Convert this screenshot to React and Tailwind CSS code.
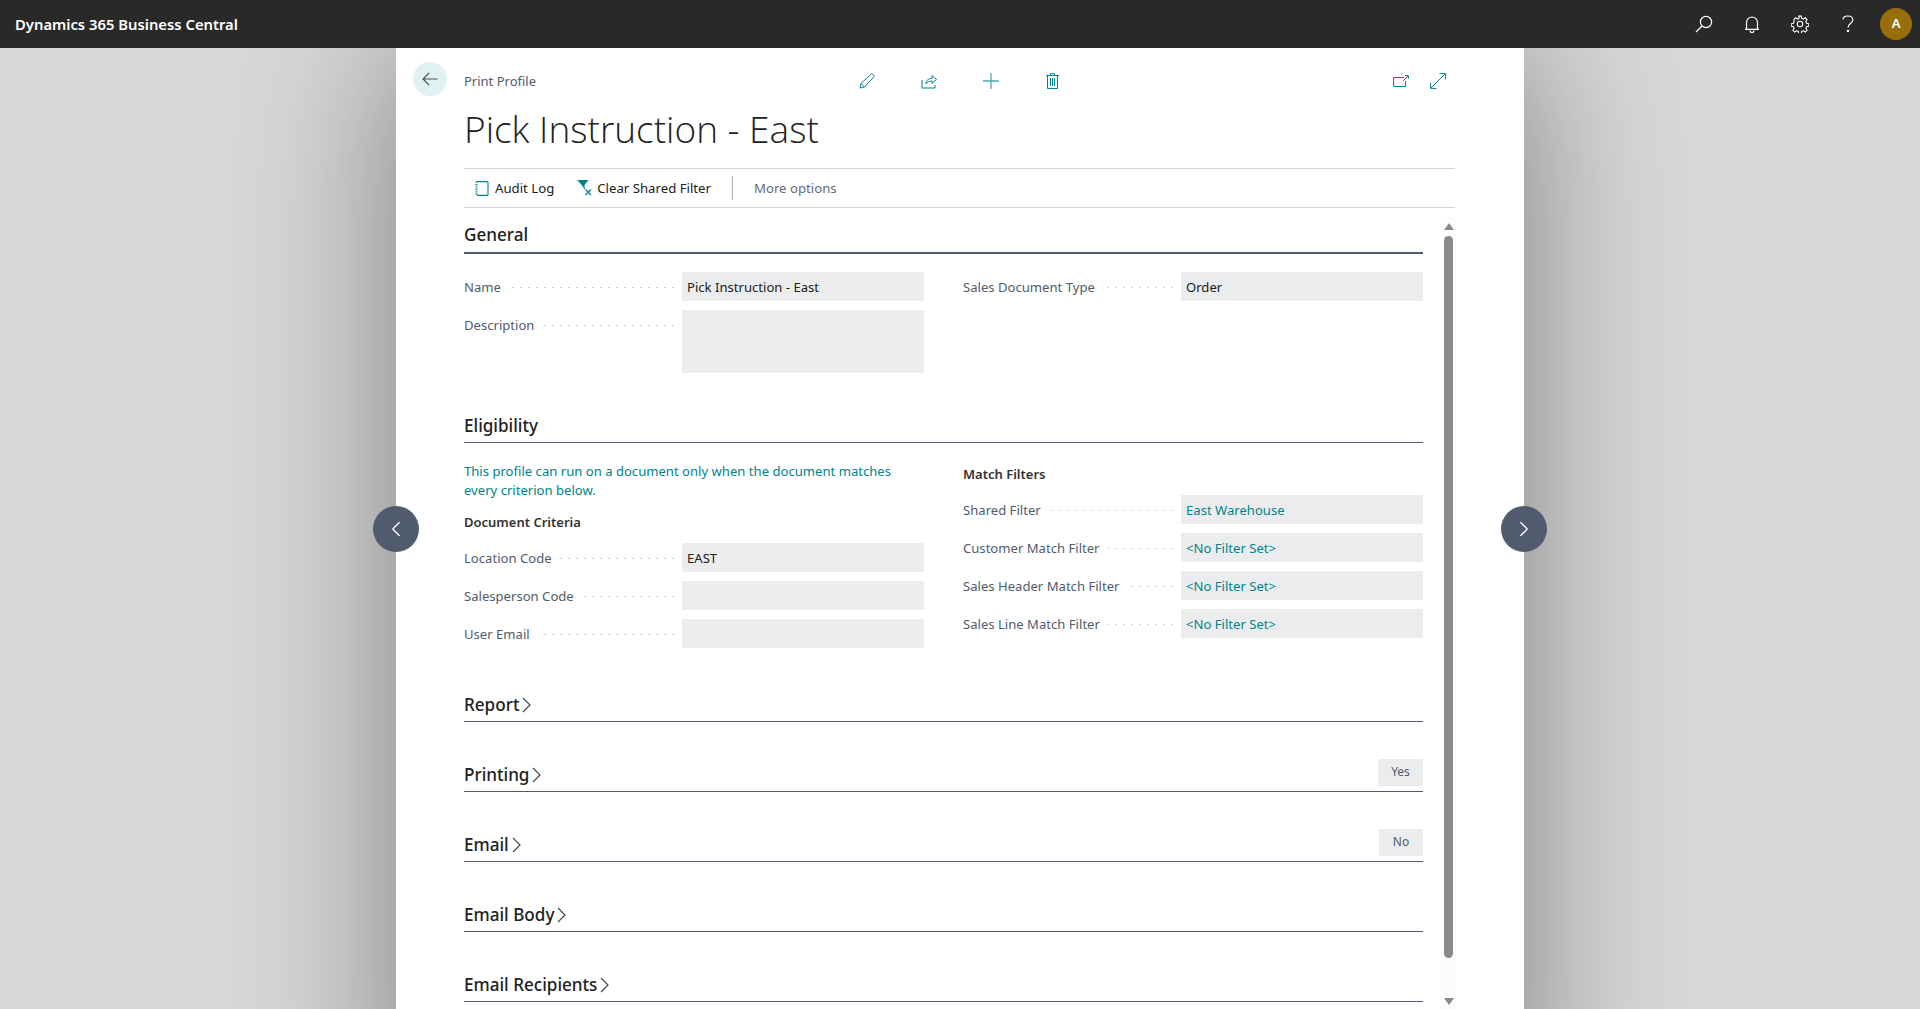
import { ChevronLeft, ChevronRight } from 'lucide-react';

function Field({ label, value, tall, teal }) {
  return (
    <div className="flex">
      <div className="w-[218px] h-[29px] flex items-center pt-[2px] pr-[5px]">
        <span className="text-[13.1px] text-[#505c6d] whitespace-nowrap">{label}</span>
        <span className="flex-1 ml-2 h-[3px] bg-[radial-gradient(circle,#c4c7cb_0.8px,transparent_1.1px)] bg-size-[8px_3px] bg-repeat-x bg-right" />
      </div>
      <div className={`w-[242px] ${tall ? 'h-[63px]' : 'h-[29px]'} bg-[#ebecee] pl-[5px] leading-[31px] text-[13.1px] whitespace-nowrap ${teal ? 'text-[#00848a]' : 'text-[#212121]'}`}>
        {value}
      </div>
    </div>
  );
}

function SectionHead({ title, open, badge, badgeWidth, className }) {
  return (
    <div className={`h-[34px] flex items-center justify-between border-b-[1.5px] border-[#505c6d] ${className}`}>
      <div className="flex items-center gap-[3px] text-[17.1px] font-medium text-[#212121]">
        {title}
        {!open && (
          <svg width="9" height="16" viewBox="0 0 9 16" fill="none" stroke="#404040" strokeWidth="1.1" className="mt-[2px]">
            <path d="M1 1l7 7-7 7" />
          </svg>
        )}
      </div>
      {badge && (
        <div className={`${badgeWidth} h-[27px] -mt-[5px] bg-[#ebecee] text-[12px] text-[#505c6d] flex items-center justify-center`}>{badge}</div>
      )}
    </div>
  );
}

function TealIcon({ w, h, vb, children, color = '#00848a', className = '' }) {
  return (
    <svg width={w} height={h} viewBox={vb} fill="none" stroke={color} strokeWidth="1" className={className}>
      {children}
    </svg>
  );
}

export default function App() {
  return (
    <div className="h-screen overflow-hidden bg-[#d8d8d8] relative font-['Noto_Sans',sans-serif]">
      {/* top bar */}
      <header className="relative z-10 h-12 bg-[#292929] flex items-center justify-between pl-[15px]">
        <span className="text-white text-[14.8px] font-semibold">Dynamics 365 Business Central</span>
        <div className="flex items-center">
          <button className="w-12 h-12 flex items-center justify-center">
            <svg width="18" height="18" viewBox="0 0 18 18" fill="none" stroke="#fff" strokeWidth="1.2">
              <circle cx="11" cy="7" r="5.6" />
              <path d="M7 11l-6 6" />
            </svg>
          </button>
          <button className="w-12 h-12 flex items-center justify-center">
            <svg width="16" height="18" viewBox="0 0 16 18" fill="none" stroke="#fff" strokeWidth="1.2">
              <path d="M2.5 14V7.5a5.5 5.5 0 0 1 11 0V14M1 14.3h14M6 15.5a2 2 0 0 0 4 0" />
            </svg>
          </button>
          <button className="w-12 h-12 flex items-center justify-center">
            <svg width="18" height="18" viewBox="0 0 24 24" fill="none" stroke="#fff" strokeWidth="1.4">
              <circle cx="12" cy="12" r="3.6" />
              <path d="M10.3 1.5h3.4l.6 3 2.2.9 2.6-1.7 2.4 2.4-1.7 2.6.9 2.2 3 .6v3.4l-3 .6-.9 2.2 1.7 2.6-2.4 2.4-2.6-1.7-2.2.9-.6 3h-3.4l-.6-3-2.2-.9-2.6 1.7-2.4-2.4 1.7-2.6-.9-2.2-3-.6v-3.4l3-.6.9-2.2L3.7 6.1l2.4-2.4 2.6 1.7 2.2-.9z" />
            </svg>
          </button>
          <button className="w-12 h-12 flex items-center justify-center">
            <svg width="12" height="18" viewBox="0 0 12 18" fill="none" stroke="#fff" strokeWidth="1.2">
              <path d="M1 4.6C1 2.3 3.2 1 5.8 1c2.8 0 5 1.5 5 3.9 0 3.6-4.8 3.6-4.8 7.6" />
              <circle cx="6" cy="16" r=".7" fill="#fff" />
            </svg>
          </button>
          <div className="w-8 h-8 ml-2 mr-2 rounded-full bg-[#986f0b] text-white text-[13px] font-semibold flex items-center justify-center">A</div>
        </div>
      </header>

      {/* page card */}
      <div className="ml-[396px] w-[1128px] h-[1100px] bg-white shadow-[0_0_150px_rgba(0,0,0,0.42)]">
        <div className="flex items-center h-[34px] pt-[16px] box-content pl-[17px] pr-[78px]">
          <button className="w-[34px] h-[34px] rounded-full bg-[#dff1f3] flex items-center justify-center -translate-y-[2px]">
            <svg width="16" height="14" viewBox="0 0 16 14" fill="none" stroke="#505050" strokeWidth="1.1">
              <path d="M15.5 7H1M7 1L1 7l6 6" />
            </svg>
          </button>
          <span className="ml-[17px] w-[395px] text-[13px] text-[#505c6d] pt-[1px]">Print Profile</span>
          <div className="flex items-center">
            <TealIcon w={16} h={16} vb="0 0 16 16" className="mr-[46px]">
              <path d="M1 15l1-4.500L11.800 1.300a1.500 1.500 0 0 1 2.100 0l.8.8a1.500 1.500 0 0 1 0 2.100L5.500 14zM2 10.500L5.500 14" />
            </TealIcon>
            <TealIcon w={16} h={15} vb="0 0 16 15" className="mr-[46px]">
              <path d="M1 6v8h13V11M5 10c0-4 3-5.500 6-5.500V1.500L15.500 5.500 11 9.500V7C8.500 7 6.500 8 5 10z" />
            </TealIcon>
            <TealIcon w={16} h={16} vb="0 0 16 16" color="#4aa9ae" className="mr-[47px]">
              <path d="M8 0v16M0 8h16" strokeWidth="1.3" />
            </TealIcon>
            <TealIcon w={13} h={16} vb="0 0 13 16">
              <path d="M0 2.500h13M4.500 2.500V.6h4v1.900M1.500 2.500v13h10v-13M4.500 5v8M6.500 5v8M8.500 5v8" />
            </TealIcon>
          </div>
          <div className="ml-auto flex items-center gap-[21px]">
            <TealIcon w={16} h={12} vb="0 0 16 12">
              <path d="M11 2.500H.6v9h12V6M10 6l5-5M12 .6h3.400V4" />
            </TealIcon>
            <TealIcon w={16} h={16} vb="0 0 16 16">
              <path d="M1 15L15 1M9.500.6h5.900v5.900M.6 9.500v5.900h5.900" />
            </TealIcon>
          </div>
        </div>

        <div className="ml-[68px] mr-[69px]">
          <h1 className="mt-[5px] h-[52px] text-[37px] leading-[52px] font-light font-['Open_Sans',sans-serif] text-[#212121]">Pick Instruction - East</h1>
          {/* command bar */}
          <div className="mt-[13px] h-[40px] pt-[2px] border-y border-[#d4d4d6] flex items-center text-[13.2px] text-[#212121]">
            <svg width="14" height="15" viewBox="0 0 14 15" fill="none" stroke="#00848a" strokeWidth="1.1" className="ml-[11px] -mt-[2px]">
              <path d="M2 .6h10a1 1 0 0 1 1 1v11.800a1 1 0 0 1-1 1H2" />
              <path d="M1.500 .6v13.800" strokeDasharray="1.200 1.200" strokeWidth="2" />
            </svg>
            <span className="ml-[6px]">Audit Log</span>
            <svg width="15" height="16" viewBox="0 0 15 16" className="ml-[23px] -mt-[2px]" fill="none">
              <path d="M0 0h11.500L7.500 5v2.500L4 4z" fill="#00848a" />
              <path d="M8.500 9.500l5.500 5.500M14 9.500l-5.500 5.500M4 3l4 6" stroke="#00848a" strokeWidth="1.200" />
            </svg>
            <span className="ml-[5px]">Clear Shared Filter</span>
            <span className="ml-[21px] w-px h-6 -mt-[2px] bg-[#a9b0b8]" />
            <span className="ml-[21px] text-[#5f6b7a]">More options</span>
          </div>
        </div>

        <div className="relative pt-[12px] ml-[68px] mr-[32px] pr-[69px]">
          {/* scrollbar */}
          <div className="absolute right-[36px] top-[10px] w-[15px] h-[792px] bg-[#fcfcfc] flex flex-col items-center">
            <span className="mt-[5px] w-0 h-0 border-x-[5px] border-x-transparent border-b-[7px] border-b-[#8a8a8a]" />
            <span className="mt-[6px] w-[9px] h-[722px] rounded-full bg-[#8a8a8a]" />
            <span className="mt-[40px] w-0 h-0 border-x-[5px] border-x-transparent border-t-[7px] border-t-[#8a8a8a]" />
          </div>

          <SectionHead title="General" open className="border-b-[2px] pb-[2px]" />
          <div className="mt-[18px] grid grid-cols-2 gap-x-[39px]">
            <div className="flex flex-col gap-[9px]">
              <Field label="Name" value="Pick Instruction - East" />
              <Field label="Description" tall />
            </div>
            <div>
              <Field label="Sales Document Type" value="Order" />
            </div>
          </div>

          <SectionHead title="Eligibility" open className="mt-[36px]" />
          <div className="mt-[18px] grid grid-cols-2 gap-x-[39px]">
            <div>
              <p className="text-[13.1px] leading-[19px] text-[#00848a] mt-[1px]">
                This profile can run on a document only when the document matches every criterion below.
              </p>
              <h3 className="mt-[13px] text-[13px] leading-[19px] font-semibold text-[#333]">Document Criteria</h3>
              <div className="mt-[11px] flex flex-col gap-[9px]">
                <Field label="Location Code" value="EAST" />
                <Field label="Salesperson Code" />
                <Field label="User Email" />
              </div>
            </div>
            <div>
              <h3 className="mt-[4px] text-[13px] leading-[19px] font-semibold text-[#333]">Match Filters</h3>
              <div className="mt-[11px] flex flex-col gap-[9px]">
                <Field label="Shared Filter" value="East Warehouse" teal />
                <Field label="Customer Match Filter" value="<No Filter Set>" teal />
                <Field label="Sales Header Match Filter" value="<No Filter Set>" teal />
                <Field label="Sales Line Match Filter" value="<No Filter Set>" teal />
              </div>
            </div>
          </div>

          <SectionHead title="Report" className="mt-[40px]" />
          <SectionHead title="Printing" badge="Yes" badgeWidth="w-[45px]" className="mt-[36px]" />
          <SectionHead title="Email" badge="No" badgeWidth="w-[44px]" className="mt-[36px]" />
          <SectionHead title="Email Body" className="mt-[36px]" />
          <SectionHead title="Email Recipients" className="mt-[36px]" />
        </div>
      </div>

      {/* prev / next overlays */}
      <button className="absolute left-[373px] top-[506px] w-[46px] h-[46px] rounded-full bg-[#505c6d] flex items-center justify-center text-white">
        <ChevronLeft size={26} strokeWidth={1.2} />
      </button>
      <button className="absolute left-[1501px] top-[506px] w-[46px] h-[46px] rounded-full bg-[#505c6d] flex items-center justify-center text-white">
        <ChevronRight size={26} strokeWidth={1.2} />
      </button>
    </div>
  );
}
